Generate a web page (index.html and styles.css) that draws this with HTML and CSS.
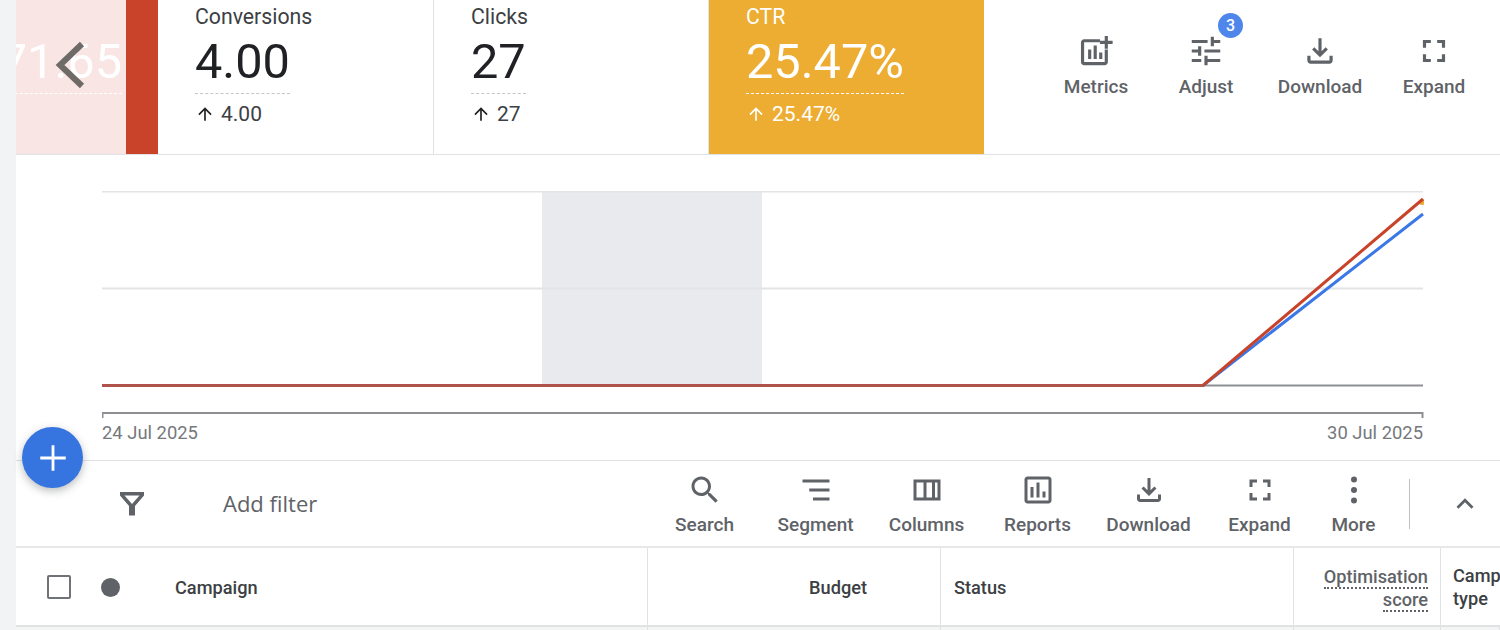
FILE: index.html
```html
<!DOCTYPE html>
<html lang="en">
<head>
  <meta charset="UTF-8" />
  <title>Campaigns</title>
  <link rel="stylesheet" href="styles.css" />
</head>
<body>
  <div class="page">
    <main class="main">

      <section class="scorecards">
        <div class="card card-pink">
          <div class="card-value-wrap"><div class="card-value">71.65</div></div>
        </div>
        <div class="card-strip"></div>
        <div class="card card-plain card-first">
          <div class="card-label">Conversions</div>
          <div class="card-value">4.00</div>
          <div class="card-delta">
            <svg class="arrow" viewBox="0 0 24 24"><path d="M4 12l1.41 1.41L11 7.83V20h2V7.83l5.58 5.59L20 12l-8-8-8 8z"/></svg>4.00
          </div>
        </div>
        <div class="card card-plain">
          <div class="card-label">Clicks</div>
          <div class="card-value">27</div>
          <div class="card-delta">
            <svg class="arrow" viewBox="0 0 24 24"><path d="M4 12l1.41 1.41L11 7.83V20h2V7.83l5.58 5.59L20 12l-8-8-8 8z"/></svg>27
          </div>
        </div>
        <div class="card card-orange">
          <div class="card-label">CTR</div>
          <div class="card-value">25.47%</div>
          <div class="card-delta">
            <svg class="arrow" viewBox="0 0 24 24"><path d="M4 12l1.41 1.41L11 7.83V20h2V7.83l5.58 5.59L20 12l-8-8-8 8z"/></svg>25.47%
          </div>
        </div>

        <div class="card-tools">
          <div class="tool">
            <svg class="icon" viewBox="0 0 24 24"><path d="M4.500 6.500h10V4.500h-10c-1.100 0-2 .9-2 2V19c0 1.100.9 2 2 2h13c1.100 0 2-.9 2-2V11h-2v8h-13V6.500z"/><path d="M7 11h2v6H7zM10.500 8.500h2V17h-2zM14 13h2v4h-2zM17.500 2.500h2V5.500H22.500v2h-3v3h-2v-3h-3v-2h3z"/></svg>
            <span>Metrics</span>
          </div>
          <div class="tool">
            <span class="badge">3</span>
            <svg class="icon" viewBox="0 0 24 24"><path d="M3 17v2h6v-2H3zM3 5v2h10V5H3zm10 16v-2h8v-2h-8v-2h-2v6h2zM7 9v2H3v2h4v2h2V9H7zm14 4v-2H11v2h10zm-6-4h2V7h4V5h-4V3h-2v6z"/></svg>
            <span>Adjust</span>
          </div>
          <div class="tool">
            <svg class="icon" viewBox="0 0 24 24"><path d="M18 15v3H6v-3H4v3c0 1.100.9 2 2 2h12c1.100 0 2-.9 2-2v-3h-2zm-1-4l-1.410-1.410L13 12.170V4h-2v8.170L8.410 9.590 7 11l5 5 5-5z"/></svg>
            <span>Download</span>
          </div>
          <div class="tool">
            <svg class="icon" viewBox="0 0 24 24"><path d="M7 14H5v5h5v-2H7v-3zm-2-4h2V7h3V5H5v5zm12 7h-3v2h5v-5h-2v3zM14 5v2h3v3h2V5h-5z"/></svg>
            <span>Expand</span>
          </div>
        </div>
      </section>

      <section class="chart">
        <svg class="plot" viewBox="0 0 1322 232" width="1322" height="232">
          <rect x="440" y="0" width="220" height="194" fill="#e8eaed"/>
          <line x1="0" x2="1321" y1="0.5" y2="0.5" stroke="#e3e4e6" stroke-width="2"/>
          <line x1="0" x2="1321" y1="97.500" y2="97.500" stroke="#e3e4e6" stroke-width="2"/>
          <line x1="0" x2="1321" y1="194.500" y2="194.500" stroke="#8d8f92" stroke-width="2"/>
          <polyline points="0,194.500 1101,194.500 1321,23" fill="none" stroke="#3b78e7" stroke-width="3"/>
          <circle cx="1320" cy="11" r="3" fill="#edac32"/>
          <polyline points="0,194.500 1101,194.500 1321,8" fill="none" stroke="#c8432a" stroke-width="3"/>
          <line x1="0" x2="1101" y1="194.500" y2="194.500" stroke="#b0534a" stroke-width="3"/>
          <path d="M0.500 227V222H1320.500V227" fill="none" stroke="#8d8f92" stroke-width="2"/>
        </svg>
        <div class="chart-dates">
          <span>24 Jul 2025</span>
          <span>30 Jul 2025</span>
        </div>
      </section>

      <section class="toolbar">
        <svg class="filter-icon" viewBox="0 0 26 26"><path d="M1 1h24v3.500L16 15v9.500h-6V15L1 4.500z M5.500 4.500L13 13l7.500-8.500z" fill-rule="evenodd"/></svg>
        <div class="add-filter">Add filter</div>
        <div class="toolbar-tools">
          <div class="tool tool-sm">
            <svg class="icon" viewBox="0 0 24 24"><path d="M15.500 14h-.79l-.28-.27C15.410 12.590 16 11.110 16 9.500 16 5.910 13.090 3 9.500 3S3 5.910 3 9.500 5.910 16 9.500 16c1.610 0 3.090-.59 4.230-1.570l.27.28v.79l5 4.990L20.490 19l-4.990-5zm-6 0C7.010 14 5 11.990 5 9.500S7.010 5 9.500 5 14 7.010 14 9.500 11.990 14 9.500 14z"/></svg>
            <span>Search</span>
          </div>
          <div class="tool tool-sm">
            <svg class="icon" viewBox="0 0 24 24"><path d="M3 5h18v2H3zM7.500 11H21v2H7.500zM10 17h11v2H10z"/></svg>
            <span>Segment</span>
          </div>
          <div class="tool tool-sm">
            <svg class="icon" viewBox="0 0 24 24"><path d="M3 5v14h18V5H3zm6.670 12H5V7h4.670v10zm5.660 0h-3.660V7h3.660v10zM19 17h-1.670V7H19v10z"/></svg>
            <span>Columns</span>
          </div>
          <div class="tool tool-sm">
            <svg class="icon" viewBox="0 0 24 24"><path d="M19 3H5c-1.100 0-2 .9-2 2v14c0 1.100.9 2 2 2h14c1.100 0 2-.9 2-2V5c0-1.100-.9-2-2-2zm0 16H5V5h14v14zM7 10h2v7H7zm4-3h2v10h-2zm4 6h2v4h-2z"/></svg>
            <span>Reports</span>
          </div>
          <div class="tool tool-sm">
            <svg class="icon" viewBox="0 0 24 24"><path d="M18 15v3H6v-3H4v3c0 1.100.9 2 2 2h12c1.100 0 2-.9 2-2v-3h-2zm-1-4l-1.410-1.410L13 12.170V4h-2v8.170L8.410 9.590 7 11l5 5 5-5z"/></svg>
            <span>Download</span>
          </div>
          <div class="tool tool-sm">
            <svg class="icon" viewBox="0 0 24 24"><path d="M7 14H5v5h5v-2H7v-3zm-2-4h2V7h3V5H5v5zm12 7h-3v2h5v-5h-2v3zM14 5v2h3v3h2V5h-5z"/></svg>
            <span>Expand</span>
          </div>
          <div class="tool tool-sm tool-more">
            <svg class="icon" viewBox="0 0 24 24"><circle cx="12" cy="5" r="2"/><circle cx="12" cy="12" r="2"/><circle cx="12" cy="19" r="2"/></svg>
            <span>More</span>
          </div>
        </div>
        <div class="toolbar-divider"></div>
        <svg class="collapse-icon" viewBox="0 0 24 24"><path d="M12 8l-6 6 1.410 1.410L12 10.830l4.590 4.580L18 14z"/></svg>
      </section>

      <section class="table-head">
        <div class="th th-campaign">
          <span class="checkbox"></span>
          <span class="status-dot"></span>
          <span>Campaign</span>
        </div>
        <div class="th th-budget">Budget</div>
        <div class="th th-status">Status</div>
        <div class="th th-score"><span class="dotted">Optimisation</span><span class="dotted">score</span></div>
        <div class="th th-type">Campaign type</div>
      </section>

      <section class="table-row">
        <div class="td"></div>
        <div class="td"></div>
        <div class="td"></div>
        <div class="td"></div>
        <div class="td"></div>
      </section>

      <svg class="back-chevron" viewBox="0 0 32 50"><path d="M27 4L5 25l22 21" fill="none" stroke="#6e6a68" stroke-width="6"/></svg>
    </main>

    <button class="fab">
      <svg viewBox="0 0 24 24"><path d="M11 3h2v8h8v2h-8v8h-2v-8H3v-2h8z" fill="#fff"/></svg>
    </button>
  </div>
</body>
</html>
```

FILE: styles.css
```css
* {
  margin: 0;
  padding: 0;
  box-sizing: border-box;
}

html, body {
  height: 630px;
  overflow: hidden;
}

body {
  background: #f1f3f4;
  font-family: Roboto, sans-serif;
  color: #202124;
}

.page {
  position: relative;
  height: 630px;
  padding-left: 16px;
}

.main {
  position: relative;
  background: #fff;
  height: 630px;
  overflow: hidden;
}

/* Scorecards */
.scorecards {
  display: flex;
  height: 155px;
  border-bottom: 1px solid #e0e2e5;
}

.card {
  height: 154px;
  overflow: hidden;
}

.card-plain,
.card-orange {
  width: 275px;
  padding-left: 37px;
}

.card-first {
  width: 276px;
}

.card-plain {
  border-right: 1px solid #e0e2e5;
}

.card-orange {
  background: #edac32;
  color: #fff;
}

.card-pink {
  width: 110px;
  background: #f9e6e4;
  color: #fff;
}

.card-value-wrap {
  display: flex;
  justify-content: flex-end;
  padding-right: 4px;
  padding-top: 29px;
}

.card-strip {
  width: 32px;
  height: 154px;
  background: #c8432a;
}

.card-label {
  font-size: 21.25px;
  line-height: 24px;
  padding-top: 5px;
  height: 29px;
  color: #3c4043;
}

.card-orange .card-label {
  color: #fff;
}

.card-value {
  display: table;
  font-size: 48.7px;
  line-height: 56px;
  margin-top: 5px;
  padding-bottom: 3px;
  border-bottom: 1px dashed #c4c6c9;
}

.card-orange .card-value,
.card-pink .card-value {
  border-bottom-color: #fff;
}

.card-delta {
  display: flex;
  align-items: center;
  gap: 6px;
  font-size: 21px;
  line-height: 28px;
  margin-top: 6px;
  color: #3c4043;
}

.card-orange .card-delta {
  color: #fff;
}

.arrow {
  width: 20px;
  height: 20px;
  fill: #202124;
}

.card-orange .arrow {
  fill: #fff;
}

/* Tool buttons */
.card-tools {
  display: flex;
  margin-left: 58px;
  padding-top: 32px;
}

.tool {
  position: relative;
  display: flex;
  flex-direction: column;
  align-items: center;
  width: 112px;
  font-size: 19px;
  font-weight: 500;
  line-height: 24px;
  color: #5f6368;
}

.card-tools .tool:first-child {
  width: 108px;
}

.card-tools .tool:nth-child(3) {
  width: 116px;
}

.icon {
  width: 38px;
  height: 38px;
  fill: #5f6368;
  margin-bottom: 5px;
}

.badge {
  position: absolute;
  top: -19px;
  left: 68px;
  width: 25px;
  height: 25px;
  border-radius: 50%;
  background: #4e86ec;
  color: #fff;
  font-size: 16px;
  line-height: 25px;
  text-align: center;
}

/* Chart */
.chart {
  height: 306px;
  padding: 36px 76px 0 86px;
  border-bottom: 1px solid #e0e2e5;
}

.plot {
  display: block;
}

.chart-dates {
  display: flex;
  justify-content: space-between;
  width: 1321px;
  font-size: 18.4px;
  line-height: 24px;
  color: #75787c;
  margin-top: -2px;
}

/* Toolbar */
.toolbar {
  display: flex;
  align-items: center;
  height: 87px;
  border-bottom: 2px solid #e6e8ea;
}

.filter-icon {
  width: 26px;
  height: 26px;
  fill: #5f6368;
  margin-left: 103px;
}

.add-filter {
  font-family: "Open Sans", sans-serif;
  font-size: 22px;
  line-height: 28px;
  font-weight: 500;
  color: #5f6368;
  margin-left: 78px;
  margin-bottom: 2px;
  width: 426px;
}

.toolbar-tools {
  display: flex;
}

.tool-sm {
  width: 111px;
  padding-top: 2px;
}

.tool-sm .icon {
  width: 36px;
  height: 36px;
}

.tool-more {
  width: 77px;
}

.toolbar-divider {
  width: 1px;
  height: 50px;
  background: #bdc1c6;
  margin-left: 17px;
}

.collapse-icon {
  width: 34px;
  height: 34px;
  fill: #5f6368;
  margin-left: 38px;
}

/* Table */
.table-head,
.table-row {
  display: grid;
  grid-template-columns: 632px 293px 353px 147px 1fr;
}

.table-head {
  height: 79px;
  border-bottom: 2px solid #dfe3e3;
}

.th {
  display: flex;
  align-items: center;
  font-size: 18.2px;
  font-weight: 500;
  line-height: 23px;
  color: #3c4043;
  border-right: 1px solid #e0e2e5;
  padding-top: 1px;
}

.th-campaign {
  padding-left: 31px;
}

.checkbox {
  width: 24px;
  height: 24px;
  border: 2px solid #6f7276;
  border-radius: 2px;
}

.status-dot {
  width: 19px;
  height: 19px;
  border-radius: 50%;
  background: #5f6368;
  margin-left: 30px;
  margin-right: 55px;
}

.th-budget {
  justify-content: flex-end;
  padding-right: 73px;
}

.th-status {
  padding-left: 13px;
}

.th-score {
  flex-direction: column;
  justify-content: center;
  align-items: flex-end;
  padding-top: 5px;
  padding-right: 12px;
  color: #5f6368;
}

.dotted {
  border-bottom: 2px dotted #5f6368;
  line-height: 21px;
}

.th-type {
  padding-left: 12px;
  width: 60px;
  border-right: 0;
}

.table-row {
  height: 4px;
  background: #f1f6f4;
}

.td {
  border-right: 1px solid #e0e2e5;
}

/* Overlays */
.back-chevron {
  position: absolute;
  left: 39px;
  top: 40px;
  width: 32px;
  height: 50px;
}

.fab {
  position: absolute;
  left: 22px;
  top: 427px;
  width: 61px;
  height: 61px;
  border: none;
  border-radius: 50%;
  background: #3674e0;
  box-shadow: 0 3px 8px rgba(60, 64, 67, 0.35);
  display: flex;
  align-items: center;
  justify-content: center;
}

.fab svg {
  width: 34px;
  height: 34px;
}
```
